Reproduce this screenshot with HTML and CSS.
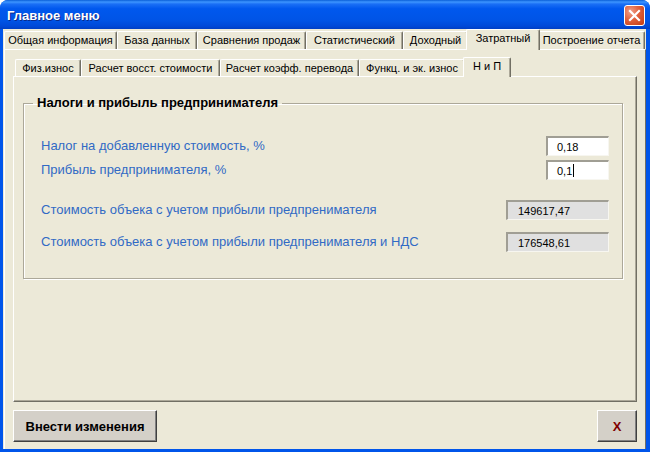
FILE: index.html
```html
<html>
  <head>
    <meta charset="utf-8">
    <link rel="stylesheet" href="styles.css">
  </head>
  <body>
    <div class="window">
      <div class="titlebar">
        <span class="title">Главное меню</span>
        <span class="close">
          <svg width="13" height="13" viewBox="0 0 13 13">
            <path d="M2 2 L11 11 M11 2 L2 11" stroke="#fff" stroke-width="2.2" stroke-linecap="square"/>
          </svg>
        </span>
      </div>
      <div class="client">
        <div class="tabs outer-tabs">
          <div class="tab">Общая информация</div>
          <div class="tab">База данных</div>
          <div class="tab">Сравнения продаж</div>
          <div class="tab">Статистический</div>
          <div class="tab">Доходный</div>
          <div class="tab active">Затратный</div>
          <div class="tab">Построение отчета</div>
        </div>
        <div class="outer-page">
          <div class="tabs inner-tabs">
            <div class="tab">Физ.износ</div>
            <div class="tab">Расчет восст. стоимости</div>
            <div class="tab">Расчет коэфф. перевода</div>
            <div class="tab">Функц. и эк. износ</div>
            <div class="tab active">Н и П</div>
          </div>
          <div class="inner-page">
            <fieldset class="group">
              <legend>Налоги и прибыль предпринимателя</legend>
              <div class="row">
                <label class="label">Налог на добавленную стоимость, %</label>
                <div class="input">0,18</div>
              </div>
              <div class="row">
                <label class="label">Прибыль предпринимателя, %</label>
                <div class="input">0,1<span class="caret"></span></div>
              </div>
              <div class="row gap-big">
                <label class="label">Стоимость объека с учетом прибыли предпренимателя</label>
                <div class="readonly">149617,47</div>
              </div>
              <div class="row gap-mid">
                <label class="label">Стоимость объека с учетом прибыли предпренимателя и НДС</label>
                <div class="readonly">176548,61</div>
              </div>
            </fieldset>
          </div>
          <div class="buttons">
            <button class="btn">Внести изменения</button>
            <button class="btn btn-x">X</button>
          </div>
        </div>
      </div>
    </div>
  </body>
</html>
```

FILE: styles.css
```css
body {
  margin: 0;
  background: #fff;
  font-family: "Liberation Sans", Arial, sans-serif;
}

.window {
  width: 650px;
  height: 452px;
  box-sizing: border-box;
  background: #0055ea;
  border-radius: 8px 8px 0 0;
  display: flex;
  flex-direction: column;
  overflow: hidden;
}

.titlebar {
  height: 29px;
  flex: none;
  display: flex;
  align-items: center;
  justify-content: space-between;
  padding: 0 5px 0 7px;
  background: linear-gradient(to bottom, #0a5fd8 0%, #3d95ff 7%, #1a6ff5 14%, #0058ee 30%, #0054e6 70%, #0049d8 90%, #003fc4 100%);
}

.title {
  color: #fff;
  font-weight: bold;
  font-size: 13px;
  text-shadow: 1px 1px 0 #0a2a8a;
  margin-top: 1px;
}

.close {
  width: 21px;
  height: 21px;
  box-sizing: border-box;
  border: 1px solid #fff;
  border-radius: 3px;
  background: radial-gradient(circle at 30% 30%, #f0a08a, #e0603c 45%, #c23a10 100%);
  display: flex;
  align-items: center;
  justify-content: center;
  margin-top: 1px;
}

.client {
  flex: 1;
  margin: 0 4px 3px 3px;
  background: #ece9d8;
  display: flex;
  flex-direction: column;
}

.tabs {
  display: grid;
  flex: none;
}

.tab {
  font-size: 11px;
  line-height: 16px;
  color: #000;
  text-align: center;
  white-space: nowrap;
  background: #ece9d8;
  border-top: 1px solid #fff;
  border-left: 1px solid #fff;
  border-right: 1px solid #716f64;
  box-shadow: inset -1px 0 0 #aca899;
  border-radius: 2px 2px 0 0;
}

.tab.active {
  position: relative;
  z-index: 1;
  margin: -2px -2px -1px -2px;
  padding-bottom: 1px;
  line-height: 16px;
}

.outer-tabs {
  grid-template-columns: 113px 80px 109px 97px 65px 70px 107px;
  height: 18px;
  margin: 2px 0 0 1px;
}

.outer-page {
  flex: 1;
  margin-left: 1px;
  border-top: 1px solid #fff;
  border-left: 1px solid #fff;
  border-right: 1px solid #716f64;
  padding: 9px 8px 0 8px;
  display: flex;
  flex-direction: column;
}

.inner-tabs {
  grid-template-columns: 66px 139px 139px 106px 44px;
  height: 17px;
  margin-left: 2px;
  justify-content: start;
}

.inner-page {
  height: 326px;
  box-sizing: border-box;
  border-top: 1px solid #fff;
  border-left: 1px solid #fff;
  border-right: 1px solid #716f64;
  border-bottom: 1px solid #716f64;
  box-shadow: inset -1px -1px 0 #aca899;
  padding: 19px 13px 0 9px;
}

.group {
  margin: 0;
  height: 183px;
  box-sizing: border-box;
  border: 1px solid #aca899;
  box-shadow: 1px 1px 0 #fff, inset 1px 1px 0 #fff;
  padding: 26px 13px 0 17px;
}

.group legend {
  font-weight: bold;
  font-size: 13px;
  line-height: 14px;
  color: #000;
  padding: 0 4px;
  margin-left: -8px;
}

.row {
  display: flex;
  align-items: center;
  justify-content: space-between;
  height: 20px;
  margin-top: 4px;
}

.row:first-of-type {
  margin-top: 0;
}

.row.gap-big {
  margin-top: 20px;
}

.row.gap-mid {
  margin-top: 12px;
}

.label {
  color: #316ac5;
  font-size: 13px;
  margin-top: -1px;
}

.input, .readonly {
  height: 20px;
  box-sizing: border-box;
  font-size: 11px;
  line-height: 16px;
  color: #000;
  border-top: 2px solid #a09e94;
  border-left: 2px solid #a09e94;
  border-right: 1px solid #f7f6f0;
  border-bottom: 1px solid #f7f6f0;
  display: flex;
  align-items: center;
}

.input {
  width: 63px;
  background: #fff;
  padding-left: 9px;
}

.readonly {
  width: 103px;
  background: #e0e0e0;
  padding-left: 10px;
}

.caret {
  display: inline-block;
  width: 1px;
  height: 13px;
  background: #000;
  margin-left: 1px;
}

.buttons {
  display: flex;
  justify-content: space-between;
  margin-top: 8px;
}

.btn {
  height: 32px;
  box-sizing: border-box;
  background: #d4d0c8;
  border-top: 1px solid #fff;
  border-left: 1px solid #fff;
  border-right: 1px solid #404040;
  border-bottom: 1px solid #404040;
  box-shadow: inset -1px -1px 0 #808080;
  font-family: "Liberation Sans", Arial, sans-serif;
  font-weight: bold;
  font-size: 13px;
  color: #000;
  padding: 0;
  width: 144px;
}

.btn-x {
  width: 40px;
  color: #800000;
}
```
